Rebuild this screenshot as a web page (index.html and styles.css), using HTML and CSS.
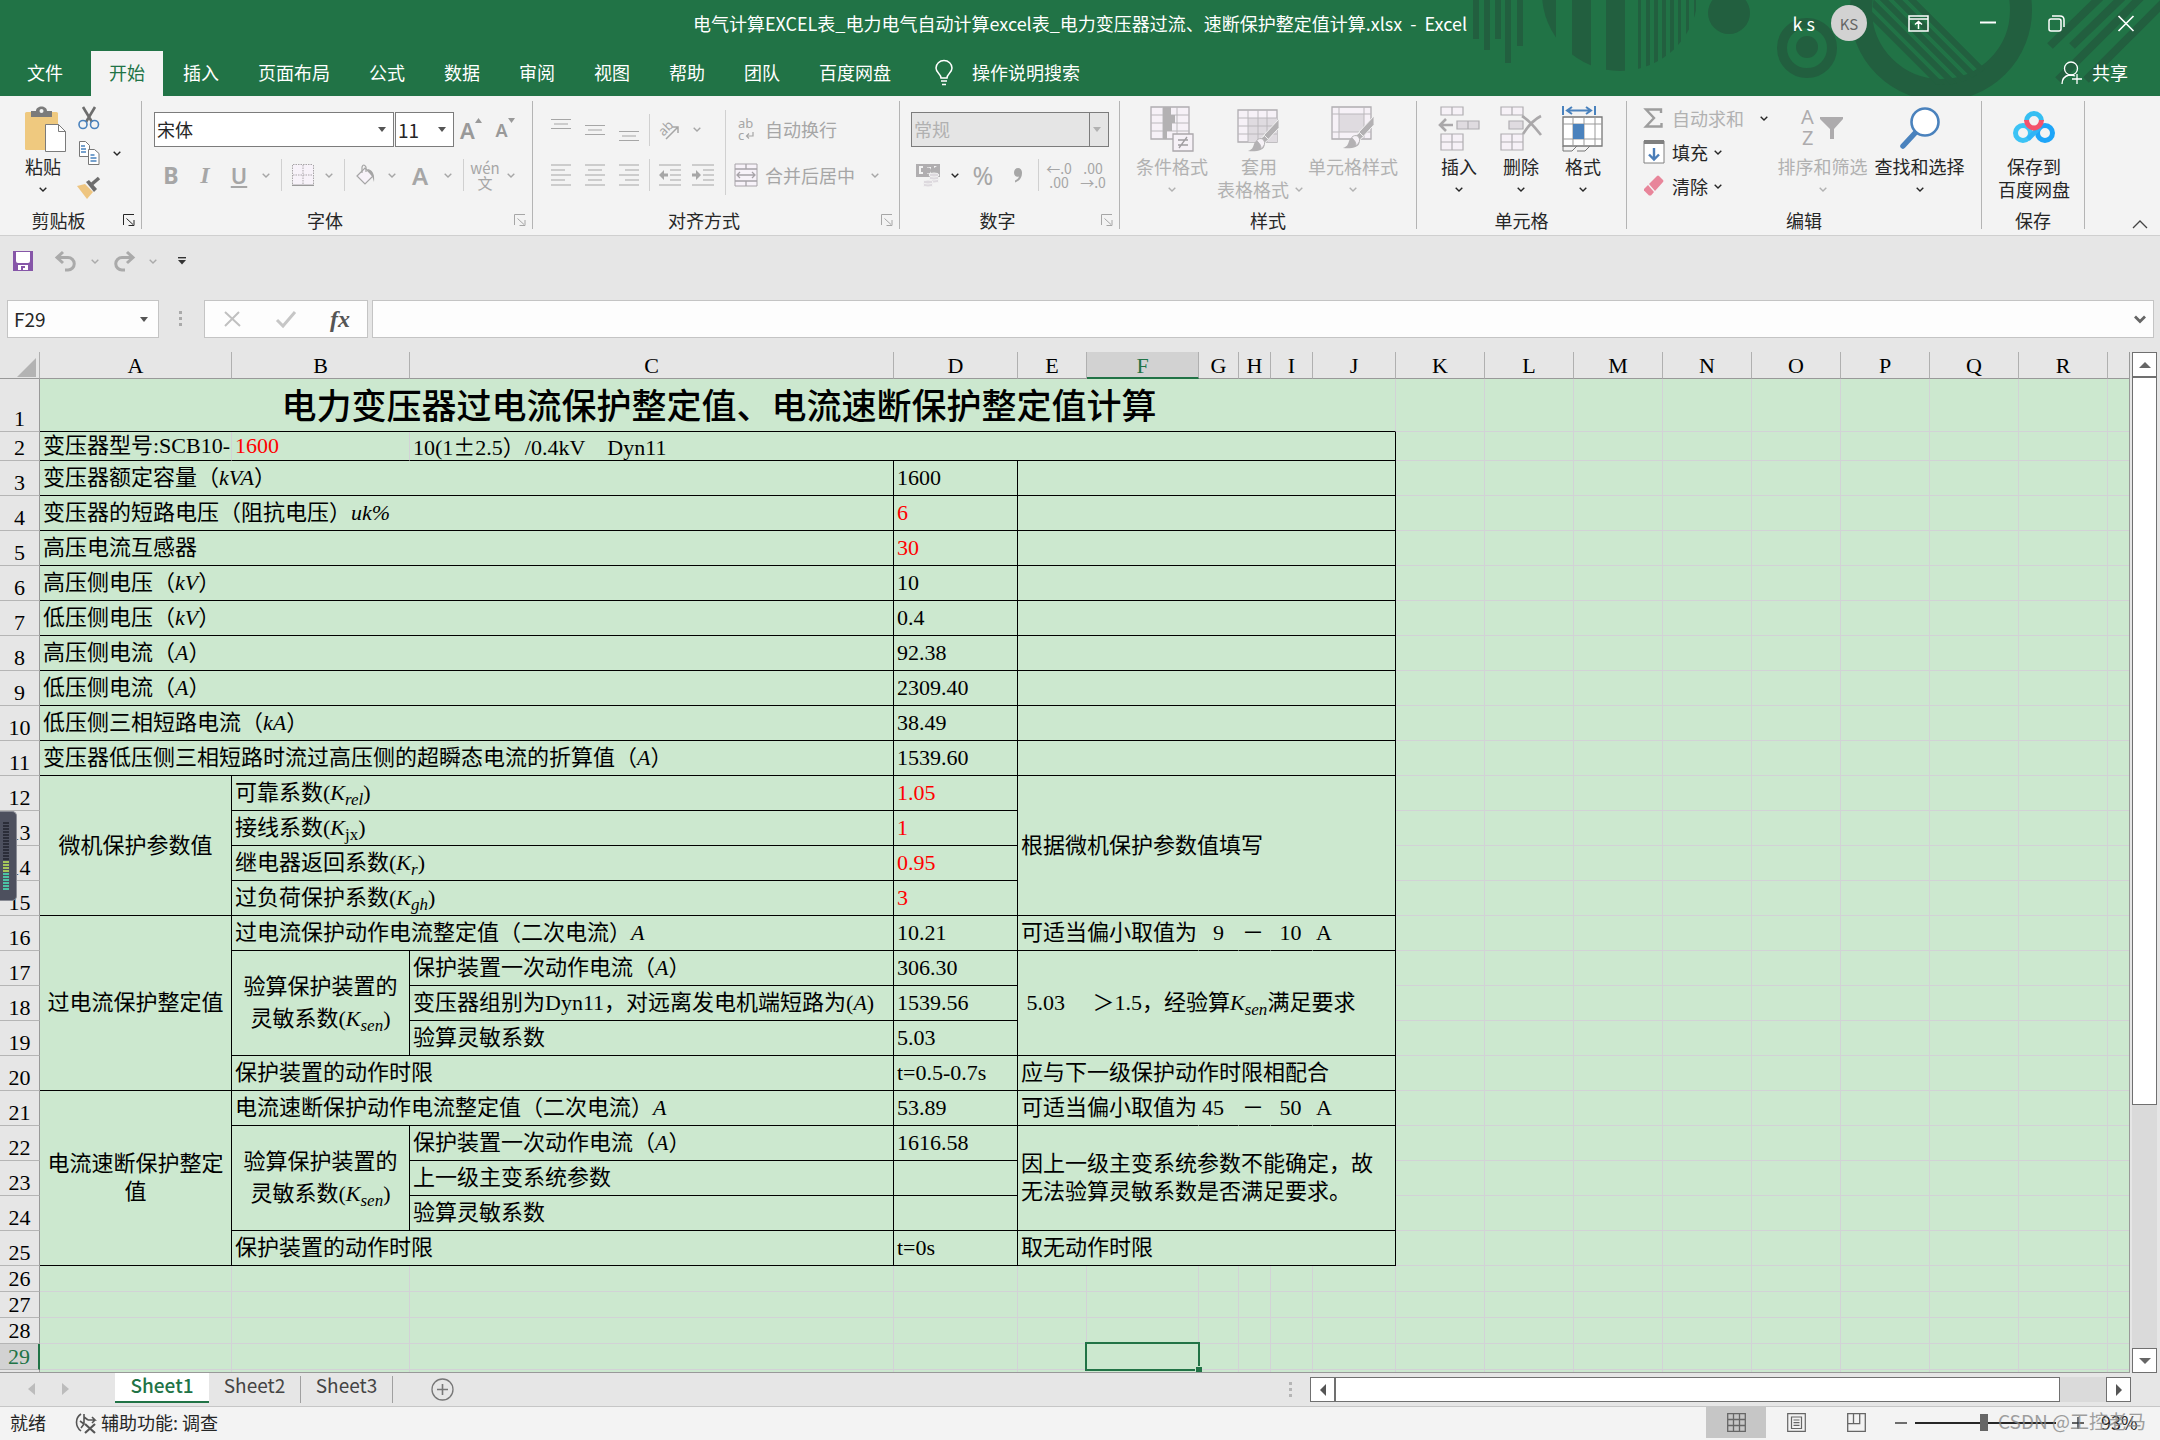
FILE: index.html
```html
<!DOCTYPE html>
<html lang="zh-CN">
<head>
<meta charset="utf-8">
<title>电气计算EXCEL表 - Excel</title>
<link rel="stylesheet" href="styles.css">
</head>
<body>
<svg class="sprite" aria-hidden="true">
  <symbol id="chev" viewBox="0 0 8 5"><path d="M.7.7 4 4 7.300.7" fill="none" stroke="currentColor" stroke-width="1.400"/></symbol>
  <symbol id="launch" viewBox="0 0 12 12"><path d="M.5 11V.5H11M3.500 4.500l6.500 6M11 6v5.500H5.500" fill="none" stroke="currentColor"/></symbol>
  <symbol id="paint" viewBox="0 0 34 34"><path d="M33 0v9L22 21l-5-4z" fill="#b3b1b3" stroke="#f3f3f3"/><path d="M18 17l4 4-4 4-5-4z" fill="#b3b1b3" stroke="#f3f3f3"/><path d="M1 33c6-2 5-5 7-9 3-4 10-1 10 3 0 5-8 7-17 6z" fill="#b3b1b3"/><path d="M10 22c4-4 9-1 8 4-1 3-3 4-4 5 1-4-1-5-4-9z" fill="#f5f1f6" stroke="#b3b1b3"/></symbol>
</svg>

<header class="top">
  <svg class="deco" viewBox="0 0 720 96" aria-hidden="true">
    <defs><clipPath id="ball"><circle cx="180" cy="-7" r="78"/></clipPath><clipPath id="ring"><ellipse cx="501" cy="15" rx="69" ry="70"/></clipPath></defs>
    <g fill="#225f3f">
      <path d="M33 0h6v39h-6zM44 0h6v50h-6zM55 0h6v39h-6zM65 0h6v63h-6zM77 0h6v46h-6z"/>
      <g clip-path="url(#ball)"><path d="M102 0h14v71h-14zM132 0h19v71h-19zM166 0h19v72h-19zM198 0h3v71h-3zM206 0h4v71h-4zM214 0h4v71h-4zM222 0h4v71h-4zM230 0h4v71h-4zM238 0h3v71h-3zM246 0h3v71h-3zM254 0h2v71h-2z"/></g>
      <circle cx="289" cy="13" r="21"/><circle cx="367" cy="47" r="11"/>
    </g>
    <g fill="none" stroke="#225f3f">
      <circle cx="367" cy="48" r="25" stroke-width="10"/>
      <circle cx="501" cy="10" r="80" stroke-width="22"/>
      <path clip-path="url(#ring)" stroke-width="6" d="M424 8l84 84M424-6l96 96M426-18l106 106M434-24l110 110M446-26l110 110"/>
      <path stroke-width="8" d="M676-18l-66 64M698-18l-66 64M716-18 618 80M738-12 646 80"/>
    </g>
  </svg>
  <div class="titlebar">
    <h1>电气计算EXCEL表_电力电气自动计算excel表_电力变压器过流、速断保护整定值计算.xlsx&nbsp; -&nbsp; Excel</h1>
    <div class="win">
      <span>k s</span><span class="avatar">KS</span>
      <button aria-label="功能区显示选项"><svg width="21" height="17" viewBox="0 0 21 17"><path d="M1 1h19v15H1zM1 4h19M10.500 14V6.500M7 9.500l3.500-3 3.500 3" fill="none" stroke="#fff" stroke-width="1.500"/></svg></button>
      <button aria-label="最小化"><svg width="16" height="17" viewBox="0 0 16 17"><path d="M0 7.500h16" stroke="#fff" stroke-width="2"/></svg></button>
      <button aria-label="还原"><svg width="17" height="17" viewBox="0 0 17 17"><path d="M4 1h8q4 0 4 4v7" fill="none" stroke="#fff" stroke-width="1.500"/><rect x="1" y="4" width="12" height="12" rx="2" fill="none" stroke="#fff" stroke-width="1.500"/></svg></button>
      <button aria-label="关闭"><svg width="16" height="17" viewBox="0 0 16 17"><path d="M.5 1l15 15M15.500 1l-15 15" stroke="#fff" stroke-width="1.700"/></svg></button>
    </div>
  </div>
  <nav class="tabs">
    <button class="file">文件</button><button class="on">开始</button><button>插入</button><button>页面布局</button><button>公式</button><button>数据</button><button>审阅</button><button>视图</button><button>帮助</button><button>团队</button><button>百度网盘</button>
    <button class="tell"><svg width="18" height="26" viewBox="0 0 18 26"><path d="M6 18c0-4-5-5-5-10a8 7.500 0 0116 0c0 5-5 6-5 10zM6 21h6M7 24.500h4" fill="none" stroke="#fff" stroke-width="1.500"/></svg>操作说明搜索</button>
    <button class="share"><svg width="22" height="24" viewBox="0 0 22 24"><path d="M1 23c0-5 3-8 7-9M14 15c-2-1-4-1-6-1M16 13v10M11 18h10" fill="none" stroke="#fff" stroke-width="1.300"/><circle cx="10" cy="7.500" r="6.500" fill="none" stroke="#fff" stroke-width="1.300"/></svg>共享</button>
  </nav>
</header>

<section class="ribbon">
  <div class="group g-clip">
    <div class="body">
      <button class="big w-paste"><svg width="47" height="46" viewBox="-5 0 47 46"><rect x="0" y="6" width="33" height="38" rx="1.500" fill="#efc97f"/><path d="M6 11V5h5c0-6 11-6 11 0h5v6z" fill="#7b7b7b"/><circle cx="16.500" cy="5" r="2" fill="#f3f3f3"/><path d="M20.500 18.500h13l7 7v20h-20z" fill="#fff" stroke="#7b7b7b"/><path d="M33.500 18.500v7h7" fill="none" stroke="#7b7b7b"/></svg><span>粘贴</span><svg class="chev"><use href="#chev"/></svg></button>
      <div class="stack">
        <button class="ico"><svg width="22" height="24" viewBox="0 0 22 24"><path d="M5 1l9 15M17 1 8 16" stroke="#6d6d6d" stroke-width="2.600"/><circle cx="5" cy="18.500" r="4" fill="none" stroke="#4a82bd" stroke-width="1.600"/><circle cx="16.500" cy="18.500" r="4" fill="none" stroke="#4a82bd" stroke-width="1.600"/></svg></button>
        <div class="line"><button class="ico"><svg width="22" height="24" viewBox="0 0 22 24"><path d="M1.500.5h6l4 4v11h-10z" fill="#fff" stroke="#777"/><path d="M3 5h4M3 8h5M3 11h5" stroke="#4a82bd" stroke-width="1.300"/><path d="M10.500 8.500h6l4.500 4v11H10.500z" fill="#fff" stroke="#777"/><path d="M12.500 14h4M12.500 17h6M12.500 20h6" stroke="#4a82bd" stroke-width="1.300"/></svg></button><svg class="chev"><use href="#chev"/></svg></div>
        <button class="ico"><svg width="24" height="22" viewBox="0 0 24 22"><path d="M0 9l8-2 8 8-6 7z" fill="#eec580"/><path d="M9 5l3-2 8 9-3 3z" fill="#6d6d6d"/><path d="M15 7l7-6" stroke="#6d6d6d" stroke-width="3.500"/></svg></button>
      </div>
    </div>
    <footer><span>剪贴板</span><button aria-label="剪贴板设置"><svg width="12" height="12"><use href="#launch"/></svg></button></footer>
  </div>

  <div class="group g-font dim">
    <div class="body col">
      <div class="line top-line">
        <label class="combo c-name"><select aria-label="字体"><option>宋体</option></select></label>
        <label class="combo c-size"><select aria-label="字号"><option>11</option></select></label>
        <button class="s28 grow">A<svg width="7" height="5"><path d="M0 5 3.500 0 7 5z" fill="currentColor"/></svg></button>
        <button class="s28 grow small">A<svg width="7" height="5"><path d="M0 0h7L3.500 5z" fill="currentColor"/></svg></button>
      </div>
      <div class="line">
        <button class="s34 fb">B</button><button class="s34 fi">I</button><button class="s34 fu">U</button><svg class="chev"><use href="#chev"/></svg><i class="bar b5"></i>
        <button class="s32"><svg width="22" height="22" viewBox="0 0 22 22"><path d="M1 1h20v20H1z" fill="#f7f2f9"/><path d="M1 .5h20M.5 1v20M21.500 1v20M11 1v20M1 11h20" stroke="#a9a5a9" stroke-dasharray="1.500 1" fill="none"/><path d="M0 21.300h22" stroke="#9a9a9a" stroke-width="1.400"/></svg></button><svg class="chev"><use href="#chev"/></svg><i class="bar b5"></i>
        <button class="s32"><svg width="22" height="22" viewBox="0 0 22 22"><path d="M2 12l8-8 8 8-8 8z" fill="#f7f2f9" stroke="#a5a5a5" stroke-width="1.200"/><path d="M7 9V3q1.500-4 4 0v5" fill="none" stroke="#a5a5a5" stroke-width="1.200"/><path d="M12 5c5 0 8 5 7 13-1-3-1-5-3-7z" fill="#a5a5a5"/></svg></button><svg class="chev"><use href="#chev"/></svg>
        <button class="s36 fa">A</button><svg class="chev"><use href="#chev"/></svg><i class="bar b5"></i>
        <button class="s32 wen"><span>wén</span><span>文</span></button><svg class="chev"><use href="#chev"/></svg>
      </div>
    </div>
    <footer><span>字体</span><button aria-label="字体设置"><svg width="12" height="12"><use href="#launch"/></svg></button></footer>
  </div>

  <div class="group g-align dim">
    <div class="body">
      <div class="col">
        <div class="line top-line">
          <button class="s34"><svg width="20" height="24"><path d="M0 1.500h20M3 6h14M0 10.500h20" stroke="currentColor" stroke-width="1.200"/></svg></button>
          <button class="s34"><svg width="20" height="24"><path d="M0 7.500h20M3 12h14M0 16.500h20" stroke="currentColor" stroke-width="1.200"/></svg></button>
          <button class="s34"><svg width="20" height="24"><path d="M0 13.500h20M3 18h14M0 22.500h20" stroke="currentColor" stroke-width="1.200"/></svg></button><i class="bar b3"></i>
          <button class="s34"><svg width="22" height="22" viewBox="0 0 22 22"><text x="0" y="13" class="svgab" transform="rotate(-45 8 10)">ab</text><path d="M7 20 19 8M19 14V8h-6" fill="none" stroke="currentColor" stroke-width="1.500"/></svg></button><svg class="chev"><use href="#chev"/></svg>
        </div>
        <div class="line">
          <button class="s34"><svg width="20" height="22"><path d="M0 1h20M0 6h14M0 11h20M0 16h14M0 21h20" stroke="currentColor" stroke-width="1.200"/></svg></button>
          <button class="s34"><svg width="20" height="22"><path d="M0 1h20M3 6h14M0 11h20M3 16h14M0 21h20" stroke="currentColor" stroke-width="1.200"/></svg></button>
          <button class="s34"><svg width="20" height="22"><path d="M0 1h20M6 6h14M0 11h20M6 16h14M0 21h20" stroke="currentColor" stroke-width="1.200"/></svg></button><i class="bar b3"></i>
          <button class="s34"><svg width="22" height="22"><path d="M0 1h22M11 6h11M11 11h11M11 16h11M0 21h22" stroke="currentColor" stroke-width="1.200"/><path d="M0 11l5-5v3.500h4v3H5V16z" fill="currentColor"/></svg></button>
          <button class="s32"><svg width="22" height="22"><path d="M0 1h22M11 6h11M11 11h11M11 16h11M0 21h22" stroke="currentColor" stroke-width="1.200"/><path d="M9 11 4 6v3.500H0v3h4V16z" fill="currentColor"/></svg></button>
        </div>
      </div>
      <i class="bar tall"></i>
      <div class="col">
        <div class="line top-line"><button class="txt"><svg width="20" height="24" viewBox="0 0 20 24"><text x="2" y="10" class="svgab">ab</text><text x="2" y="22" class="svgab">c</text><path d="M17 14v4h-6M13 15.500 10.500 18l2.500 2.500" fill="none" stroke="currentColor" stroke-width="1.200"/></svg>自动换行</button></div>
        <div class="line"><button class="txt"><svg width="24" height="24" viewBox="0 0 24 24"><path d="M1 1h22v22H1z" fill="#f7f2f9" stroke="#a7a3a8"/><path d="M1 6h22M1 18h22M12 1v5M12 18v5M3 12h18M6 9l-3 3 3 3M18 9l3 3-3 3" fill="none" stroke="#a7a3a8" stroke-width="1.300"/></svg>合并后居中</button><svg class="chev gap"><use href="#chev"/></svg></div>
      </div>
    </div>
    <footer><span>对齐方式</span><button aria-label="对齐设置"><svg width="12" height="12"><use href="#launch"/></svg></button></footer>
  </div>

  <div class="group g-num dim">
    <div class="body col">
      <div class="line top-line"><label class="combo c-fmt"><select aria-label="数字格式" disabled><option>常规</option></select></label></div>
      <div class="line">
        <button class="s34"><svg width="24" height="24" viewBox="0 0 24 24"><path d="M0 1h24v13H0z" fill="#b0aeb0"/><path d="M3 3h4v2H5v4h2v2H3zM21 3h-3v2M11 4h4v7h-4z" fill="#f3f3f3"/><circle cx="12" cy="7.500" r="3" fill="#b0aeb0"/><g fill="#ddd9de" stroke="#f3f3f3"><ellipse cx="18" cy="18" rx="5" ry="2"/><ellipse cx="18" cy="15" rx="5" ry="2"/><ellipse cx="18" cy="12" rx="5" ry="2"/><ellipse cx="12" cy="22" rx="5" ry="2"/><ellipse cx="12" cy="19" rx="5" ry="2"/></g></svg></button><svg class="chev dark"><use href="#chev"/></svg>
        <button class="s36 pct">%</button>
        <button class="s34"><svg width="10" height="15"><path d="M1 4.500a4 4.500 0 018 0c0 5-2 8-7 10v-2c2-1 3.500-2 4-4C3 9.500 1 7.500 1 4.500z" fill="currentColor"/></svg></button><i class="bar b3"></i>
        <button class="s34 dec"><span>←.0</span><span>.00</span></button>
        <button class="s34 dec"><span>.00</span><span>→.0</span></button>
      </div>
    </div>
    <footer><span>数字</span><button aria-label="数字设置"><svg width="12" height="12"><use href="#launch"/></svg></button></footer>
  </div>

  <div class="group g-style">
    <div class="body gray">
      <button class="big w82"><svg width="44" height="46" viewBox="0 0 44 46"><path d="M1 1h38v32H1z" fill="#f6f1f7" stroke="#b0adb1" stroke-width="1.300"/><path d="M1 9h38M1 17h38M1 25h38M13 1v32M27 1v32" stroke="#bbb8bc"/><path d="M13 1h8v8h-8zM13 9h12v8H13zM13 17h9v8h-9zM13 25h4v8h-4z" fill="#b3b1b3"/><path d="M23 28h20v17H23z" fill="#f6f1f7" stroke="#aaa7ab" stroke-width="1.300"/><path d="M28 34h10M28 39h10M37 31l-8 11" stroke="#a09da1" stroke-width="1.300"/></svg><span>条件格式</span><svg class="chev"><use href="#chev"/></svg></button>
      <button class="big w92"><svg width="44" height="46" viewBox="0 0 44 46"><path d="M1 4h39v32H1z" fill="#f6f1f7" stroke="#b0adb1" stroke-width="1.300"/><path d="M11 12h29v24H11z" fill="#dfdbe0"/><path d="M1 12h39M1 20h39M1 28h39M11 4v32M21 4v32M30 4v32" stroke="#bbb8bc"/><use href="#paint" x="10" y="13" width="33" height="33"/></svg><span>套用</span><span class="two">表格格式<svg class="chev"><use href="#chev"/></svg></span></button>
      <button class="big w96"><svg width="44" height="46" viewBox="0 0 44 46"><path d="M1 1h39v32H1z" fill="#f6f1f7" stroke="#b0adb1" stroke-width="1.300"/><path d="M8 8h25v18H8z" fill="#dfdbe0"/><path d="M1 8h39M1 26h39M8 1v32M33 1v32" stroke="#bbb8bc"/><use href="#paint" x="11" y="10" width="33" height="33"/></svg><span>单元格样式</span><svg class="chev"><use href="#chev"/></svg></button>
    </div>
    <footer><span>样式</span></footer>
  </div>

  <div class="group g-cell">
    <div class="body">
      <button class="big w62"><svg width="44" height="46" viewBox="0 0 44 46"><g fill="#f6f1f7" stroke="#b0adb1" stroke-width="1.200"><path d="M4 1h22v8H4zM15 1v8M4 28h22v16H4zM15 28v16M4 36h22"/><path d="M20 15h22v8H20zM31 15v8" fill="#dfdbe0"/></g><path d="M16 19H3M9 13l-6 6 6 6" fill="none" stroke="#aaa8aa" stroke-width="2.600"/></svg><span>插入</span><svg class="chev"><use href="#chev"/></svg></button>
      <button class="big w62"><svg width="44" height="46" viewBox="0 0 44 46"><g fill="#f6f1f7" stroke="#b0adb1" stroke-width="1.200"><path d="M2 1h22v8H2zM13 1v8M2 28h22v16H2zM13 28v16M2 36h22"/><path d="M10 15h14v8H10z" fill="#dfdbe0"/></g><path d="M23 10c7 4 12 10 19 19M42 10c-8 4-13 10-18 18" fill="none" stroke="#aaa8aa" stroke-width="2.600"/></svg><span>删除</span><svg class="chev"><use href="#chev"/></svg></button>
      <button class="big w62"><svg width="44" height="46" viewBox="0 0 44 46"><path d="M2 0v9M34 0v9M6 4.500h24M11 1 6 4.500 11 8M25 1l5 3.500L25 8" fill="none" stroke="#4a82bd" stroke-width="2"/><path d="M2 11h39v29H2z" fill="#fff" stroke="#777" stroke-width="1.300"/><path d="M2 18h39M2 33h39M12 11v29M23 11v29M34 11v29" stroke="#999"/><path d="M12 18h11v15H12z" fill="#4a82bd"/><path d="M2 40v5h9l5-5M16 45h8l5-5" fill="none" stroke="#777"/></svg><span>格式</span><svg class="chev"><use href="#chev"/></svg></button>
    </div>
    <footer><span>单元格</span></footer>
  </div>

  <div class="group g-edit">
    <div class="body">
      <div class="list">
        <div class="line"><button class="txt gray"><svg width="20" height="20" viewBox="0 0 20 20"><path d="M17 5V1.500H2L10 10 2 18.500h15.500V15" fill="none" stroke="#9d9d9d" stroke-width="2.400"/></svg>自动求和</button><svg class="chev gap"><use href="#chev"/></svg></div>
        <div class="line"><button class="txt"><svg width="22" height="24" viewBox="0 0 22 24"><path d="M1 1h20v22H1z" fill="#fff" stroke="#808080"/><path d="M1 0h20v4H1z" fill="#808080"/><path d="M11 8v12M6 14.500l5 5 5-5" fill="none" stroke="#4a7db8" stroke-width="2.400"/></svg>填充</button><svg class="chev"><use href="#chev"/></svg></div>
        <div class="line"><button class="txt"><svg width="22" height="22" viewBox="0 0 22 22"><path d="M14 1q1-1 2 0l4 4q1 1 0 2l-8 9-6-7z" fill="#e8859a"/><path d="M5 10l6 7-3 3.500H6L1 15.500V14z" fill="#e8859a"/></svg>清除</button><svg class="chev"><use href="#chev"/></svg></div>
      </div>
      <button class="big w97 gray"><svg width="44" height="46" viewBox="0 0 44 46"><text x="0" y="18" class="svgaz">A</text><text x="1" y="39" class="svgaz">Z</text><path d="M19 11h23v2l-9 10v10h-4V23l-10-10z" fill="#adabad"/></svg><span>排序和筛选</span><svg class="chev"><use href="#chev"/></svg></button>
      <button class="big w97"><svg width="44" height="46" viewBox="0 0 44 46"><path d="M18 26 5 40" stroke="#4a82bd" stroke-width="5.500" stroke-linecap="round"/><circle cx="27" cy="16" r="13.500" fill="#fff" stroke="#4a82bd" stroke-width="2.600"/></svg><span>查找和选择</span><svg class="chev"><use href="#chev"/></svg></button>
    </div>
    <footer><span>编辑</span></footer>
  </div>

  <div class="group g-save">
    <div class="body">
      <button class="big w96"><svg width="44" height="46" viewBox="0 0 44 46"><g fill="none" stroke-width="5"><circle cx="11" cy="27" r="7.500" stroke="#3cc3f5"/><circle cx="33" cy="27" r="7.500" stroke="#1ea5f8"/><path d="M16 33 28 21" stroke="#2fb4f7"/><path d="M14.500 15a7.500 7.500 0 0115 0" stroke="#36bff2"/><path d="M14.500 14a7.500 8 0 0015 0" stroke="#f4526b"/></g></svg><span>保存到</span><span>百度网盘</span></button>
    </div>
    <footer><span>保存</span></footer>
  </div>
  <button class="collapse" aria-label="折叠功能区"><svg width="16" height="9"><path d="M1 8l7-7 7 7" fill="none" stroke="#444" stroke-width="1.300"/></svg></button>
</section>

<div class="qat">
  <button class="q38" aria-label="保存"><svg width="20" height="20" viewBox="0 0 20 20"><path d="M0 0h20v20H0z" fill="#8656a8"/><path d="M3 1h14v9q0 2-2 2H5q-2 0-2-2zM5 14h10v5H5z" fill="#fff"/><path d="M8 15h4v4H8z" fill="#8656a8"/><path d="M10 17h2v2h-2z" fill="#fff"/></svg></button>
  <button class="q38" aria-label="撤消"><svg width="22" height="20" viewBox="0 0 22 20"><path d="M8 1 2 6.500 8 12M2 6.500h11a6.200 6.200 0 010 12.500h-3" fill="none" stroke="#aaa" stroke-width="3"/></svg></button><svg class="chev"><use href="#chev"/></svg>
  <button class="q38" aria-label="恢复"><svg width="22" height="20" viewBox="0 0 22 20"><path d="M14 1l6 5.500-6 5.500M20 6.500H9A6.200 6.200 0 009 19h3" fill="none" stroke="#aaa" stroke-width="3"/></svg></button><svg class="chev"><use href="#chev"/></svg>
  <button class="q38" aria-label="自定义"><svg width="8" height="8"><path d="M0 .7h8" stroke="#333" stroke-width="1.400"/><path d="M0 3h8L4 7.500z" fill="#333"/></svg></button>
</div>

<div class="fbar">
  <label class="combo namebox"><input value="F29" aria-label="名称框"></label>
  <svg class="dots" width="3" height="16"><path d="M0 0h3v3H0zM0 6h3v3H0zM0 12h3v3H0z" fill="#aaa"/></svg>
  <div class="fbtns">
    <button aria-label="取消"><svg width="17" height="16"><path d="M1 1l15 14M15 1 1 15" stroke="#c0c0c0" stroke-width="2"/></svg></button>
    <button aria-label="输入"><svg width="20" height="17"><path d="M1 9l6 6L19 1" fill="none" stroke="#c6c6c6" stroke-width="3"/></svg></button>
    <button class="fx" aria-label="插入函数">fx</button>
  </div>
  <label class="formula"><input aria-label="编辑栏"><svg width="12" height="9"><path d="M1 1.500l5 5 5-5" fill="none" stroke="#666" stroke-width="2.800"/></svg></label>
</div>

<main class="sheet">
  <div class="view">
  <table>
    <colgroup><col class="c-h"><col class="c-a"><col class="c-b"><col class="c-c"><col class="c-d"><col class="c-e"><col class="c-f"><col class="c-g"><col class="c-hh"><col class="c-i"><col class="c-j"><col span="9" class="c-n"></colgroup>
    <thead><tr><th class="corner"><svg width="19" height="19"><path d="M19 0v19H0z" fill="#b3b3b3"/></svg></th><th>A<th>B<th>C<th>D<th>E<th class="cur">F<th>G<th>H<th>I<th>J<th>K<th>L<th>M<th>N<th>O<th>P<th>Q<th>R<th></tr></thead>
    <tbody>
    <tr class="r1"><th>1<td colspan="10" class="k title">电力变压器过电流保护整定值、电流速断保护整定值计算<td><td><td><td><td><td><td><td><td></tr>
    <tr class="r2"><th>2<td class="kb">变压器型号:SCB10-<td class="kb red">1600<td colspan="8" class="k">10(1<span class="cjk">±</span>2.5）/0.4kV&nbsp;&nbsp;&nbsp; Dyn11<td><td><td><td><td><td><td><td><td></tr>
    <tr><th>3<td colspan="3" class="k">变压器额定容量（<i>kVA</i>）<td class="k">1600<td colspan="6" class="k"><td><td><td><td><td><td><td><td><td></tr>
    <tr><th>4<td colspan="3" class="k">变压器的短路电压（阻抗电压）<i>uk%</i><td class="k red">6<td colspan="6" class="k"><td><td><td><td><td><td><td><td><td></tr>
    <tr><th>5<td colspan="3" class="k">高压电流互感器<td class="k red">30<td colspan="6" class="k"><td><td><td><td><td><td><td><td><td></tr>
    <tr><th>6<td colspan="3" class="k">高压侧电压（<i>kV</i>）<td class="k">10<td colspan="6" class="k"><td><td><td><td><td><td><td><td><td></tr>
    <tr><th>7<td colspan="3" class="k">低压侧电压（<i>kV</i>）<td class="k">0.4<td colspan="6" class="k"><td><td><td><td><td><td><td><td><td></tr>
    <tr><th>8<td colspan="3" class="k">高压侧电流（<i>A</i>）<td class="k">92.38<td colspan="6" class="k"><td><td><td><td><td><td><td><td><td></tr>
    <tr><th>9<td colspan="3" class="k">低压侧电流（<i>A</i>）<td class="k">2309.40<td colspan="6" class="k"><td><td><td><td><td><td><td><td><td></tr>
    <tr><th>10<td colspan="3" class="k">低压侧三相短路电流（<i>kA</i>）<td class="k">38.49<td colspan="6" class="k"><td><td><td><td><td><td><td><td><td></tr>
    <tr><th>11<td colspan="3" class="k">变压器低压侧三相短路时流过高压侧的超瞬态电流的折算值（<i>A</i>）<td class="k">1539.60<td colspan="6" class="k"><td><td><td><td><td><td><td><td><td></tr>
    <tr><th>12<td rowspan="4" class="k mid">微机保护参数值<td colspan="2" class="k">可靠系数(<i>K<sub>rel</sub></i>)<td class="k red">1.05<td colspan="6" rowspan="4" class="k">根据微机保护参数值填写<td><td><td><td><td><td><td><td><td></tr>
    <tr><th>13<td colspan="2" class="k">接线系数(<i>K</i><sub>jx</sub>)<td class="k red">1<td><td><td><td><td><td><td><td><td></tr>
    <tr><th>14<td colspan="2" class="k">继电器返回系数(<i>K<sub>r</sub></i>)<td class="k red">0.95<td><td><td><td><td><td><td><td><td></tr>
    <tr><th>15<td colspan="2" class="k">过负荷保护系数(<i>K<sub>gh</sub></i>)<td class="k red">3<td><td><td><td><td><td><td><td><td></tr>
    <tr><th>16<td rowspan="5" class="k mid">过电流保护整定值<td colspan="2" class="k">过电流保护动作电流整定值（二次电流）<i>A</i><td class="k">10.21<td colspan="2" class="k nr">可适当偏小取值为<td class="k nr">&nbsp;&nbsp;9<td class="k nr">－<td class="k nr">&nbsp;10<td class="k">A<td><td><td><td><td><td><td><td><td></tr>
    <tr><th>17<td rowspan="3" class="k mid loose">验算保护装置的<br>灵敏系数(<i>K<sub>sen</sub></i>)<td class="k">保护装置一次动作电流（<i>A</i>）<td class="k">306.30<td colspan="6" rowspan="3" class="k">&nbsp;5.03&nbsp;&nbsp;&nbsp;&nbsp; ＞1.5，经验算<i>K<sub>sen</sub></i>满足要求<td><td><td><td><td><td><td><td><td></tr>
    <tr><th>18<td class="k">变压器组别为Dyn11，对远离发电机端短路为(<i>A</i>)<td class="k">1539.56<td><td><td><td><td><td><td><td><td></tr>
    <tr><th>19<td class="k">验算灵敏系数<td class="k">5.03<td><td><td><td><td><td><td><td><td></tr>
    <tr><th>20<td colspan="2" class="k">保护装置的动作时限<td class="k">t=0.5-0.7s<td colspan="6" class="k">应与下一级保护动作时限相配合<td><td><td><td><td><td><td><td><td></tr>
    <tr><th>21<td rowspan="5" class="k mid">电流速断保护整定值<td colspan="2" class="k">电流速断保护动作电流整定值（二次电流）<i>A</i><td class="k">53.89<td colspan="2" class="k nr">可适当偏小取值为<td class="k nr">45<td class="k nr">－<td class="k nr">&nbsp;50<td class="k">A<td><td><td><td><td><td><td><td><td></tr>
    <tr><th>22<td rowspan="3" class="k mid loose">验算保护装置的<br>灵敏系数(<i>K<sub>sen</sub></i>)<td class="k">保护装置一次动作电流（<i>A</i>）<td class="k">1616.58<td colspan="6" rowspan="3" class="k wrap">因上一级主变系统参数不能确定，故<br>无法验算灵敏系数是否满足要求。<td><td><td><td><td><td><td><td><td></tr>
    <tr><th>23<td class="k">上一级主变系统参数<td class="k"><td><td><td><td><td><td><td><td><td></tr>
    <tr><th>24<td class="k">验算灵敏系数<td class="k"><td><td><td><td><td><td><td><td><td></tr>
    <tr><th>25<td colspan="2" class="k">保护装置的动作时限<td class="k">t=0s<td colspan="6" class="k">取无动作时限<td><td><td><td><td><td><td><td><td></tr>
    <tr class="rs"><th>26<td><td><td><td><td><td><td><td><td><td><td><td><td><td><td><td><td><td><td></tr>
    <tr class="rs"><th>27<td><td><td><td><td><td><td><td><td><td><td><td><td><td><td><td><td><td><td></tr>
    <tr class="rs"><th>28<td><td><td><td><td><td><td><td><td><td><td><td><td><td><td><td><td><td><td></tr>
    <tr class="rs"><th class="cur">29<td><td><td><td><td><td class="sel"><td><td><td><td><td><td><td><td><td><td><td><td><td></tr>
    <tr class="rs"><th><td><td><td><td><td><td><td><td><td><td><td><td><td><td><td><td><td><td><td></tr>
    </tbody>
  </table>
  </div>
  <div class="vscroll">
    <button aria-label="向上"><svg width="12" height="6"><path d="M0 6 6 0l6 6z" fill="#666"/></svg></button>
    <div class="vtrack"><div class="vthumb"></div></div>
    <button aria-label="向下"><svg width="12" height="6"><path d="M0 0h12L6 6z" fill="#666"/></svg></button>
  </div>
</main>

<div class="sheetbar">
  <div class="arrows"><svg width="7" height="12"><path d="M7 0v12L0 6z" fill="#bcbcbc"/></svg><svg width="7" height="12"><path d="M0 0v12l7-6z" fill="#bcbcbc"/></svg></div>
  <button class="stab on">Sheet1</button><button class="stab">Sheet2</button><button class="stab">Sheet3</button>
  <button class="add" aria-label="新工作表"><svg width="23" height="23"><circle cx="11.500" cy="11.500" r="10.500" fill="none" stroke="#777" stroke-width="1.300"/><path d="M11.500 6v11M6 11.500h11" stroke="#777" stroke-width="1.600"/></svg></button>
  <svg class="dots" width="3" height="16"><path d="M0 0h3v3H0zM0 6h3v3H0zM0 12h3v3H0z" fill="#b5b5b5"/></svg>
  <div class="hscroll">
    <button aria-label="向左"><svg width="6" height="12"><path d="M6 0v12L0 6z" fill="#555"/></svg></button>
    <div class="htrack"><div class="hthumb"></div></div>
    <button aria-label="向右"><svg width="6" height="12"><path d="M0 0v12l6-6z" fill="#555"/></svg></button>
  </div>
</div>

<footer class="status">
  <span class="ready">就绪</span>
  <button class="acc"><svg width="22" height="22" viewBox="0 0 22 22"><path d="M6 2C0 6 0 14 6 19M9 2v10l-3 4M5 9l4 3M9 5l4 3M13 8h7l-3-3M17 11l3-3" fill="none" stroke="#555" stroke-width="1.600"/><path d="M10 12l10 9M20 12l-10 9" stroke="#555" stroke-width="2.200"/></svg>辅助功能: 调查</button>
  <div class="views">
    <button class="on" aria-label="普通"><svg width="19" height="19"><path d="M.7.7h17.600v17.600H.7zM.7 6.500h17.600M.7 12.500h17.600M6.500.7v17.600M12.500.7v17.600" fill="none" stroke="#666" stroke-width="1.300"/></svg></button>
    <button aria-label="页面布局"><svg width="19" height="19"><path d="M.7.7h17.600v17.600H.7zM4.500 4h10v11.500h-10zM6.500 7h6M6.500 9.700h6M6.500 12.400h6" fill="none" stroke="#666" stroke-width="1.200"/></svg></button>
    <button aria-label="分页预览"><svg width="19" height="19"><path d="M.7.7h17.600v17.600H.7zM6.500.7v10M.7 10.700h12v-10" fill="none" stroke="#666" stroke-width="1.300"/></svg></button>
  </div>
  <button class="zm" aria-label="缩小"><svg width="12" height="12"><path d="M0 6h12" stroke="#333" stroke-width="1.400"/></svg></button>
  <input type="range" min="0" max="100" value="49" aria-label="缩放">
  <button class="zm" aria-label="放大"><svg width="12" height="12"><path d="M0 6h12M6 0v12" stroke="#333" stroke-width="1.400"/></svg></button>
  <span class="pct93">93%</span>
</footer>
<span class="mark">CSDN @工控老马</span>
<div class="meter"><svg width="6" height="70"><path d="M3 0v38" stroke="#2b2d38" stroke-width="6" stroke-dasharray="2 1"/><path d="M3 39v12" stroke="#a5c75a" stroke-width="6" stroke-dasharray="2 1"/><path d="M3 51v18" stroke="#4bc5a4" stroke-width="6" stroke-dasharray="2 1"/></svg></div>
</body>
</html>
```
FILE: styles.css
```css
* { box-sizing: border-box; }
body {
  margin: 0; height: 100vh; display: flex; flex-direction: column; overflow: hidden;
  background: #e6e6e6; color: #262626; position: relative;
  font-family: "Noto Sans CJK SC", "Noto Sans", sans-serif; font-size: 18px; line-height: 23px;
}
button { border: 0; background: none; padding: 0; margin: 0; font: inherit; color: inherit; display: flex; align-items: center; justify-content: center; white-space: nowrap; }
select, input { font: inherit; color: #262626; border: 0; background: none; margin: 0; padding: 0; min-width: 0; border-radius: 0; outline: 0; }
svg { display: block; flex: none; overflow: visible; }
.sprite { width: 0; height: 0; position: absolute; }

/* title bar and tabs */
.top { position: relative; background: #217346; color: #fff; flex: none; }
.deco { position: absolute; right: 0; top: 0; width: 720px; height: 96px; overflow: hidden; }
.titlebar { position: relative; display: grid; grid-template-columns: 1fr auto 1fr; align-items: center; height: 51px; padding-bottom: 5px; }
.titlebar h1 { grid-column: 2; margin: 0; font-size: 18px; font-weight: 400; white-space: nowrap; }
.win { display: flex; justify-content: flex-end; align-items: center; }
.win button { width: 69px; height: 40px; }
.avatar { width: 36px; height: 36px; border-radius: 50%; background: #d2d2d2; color: #666; font-size: 15px; display: grid; place-items: center; margin: 0 17px 0 16px; }
.tabs { position: relative; display: flex; gap: 1px; height: 45px; }
.tabs button { padding: 0 19px 2px; }
.tabs .file { padding: 0 26px 2px; width: 90px; }
.tabs .on { background: #f3f3f3; color: #217346; padding: 0 18px 2px; }
.tabs .tell { gap: 19px; padding-left: 24px; }
.tabs .share { margin-left: auto; gap: 9px; padding-right: 32px; }

/* ribbon */
.ribbon { display: flex; flex: none; background: #f3f3f3; border-bottom: 1px solid #cfcfcf; padding: 5px 0 6px; }
.group { display: flex; flex-direction: column; border-right: 1px solid #b4b4b4; flex: none; height: 128px; }
.group .body { display: flex; flex: 1; }
.group footer { display: flex; align-items: center; height: 18px; }
.group footer span { flex: 1; text-align: center; }
.group footer button { width: 24px; }
.g-clip { width: 142px; } .g-clip .body { padding-left: 16px; }
.g-font { width: 391px; } .g-font .body { padding-left: 12px; }
.g-align { width: 367px; } .g-align .body { padding-left: 11px; }
.g-num { width: 220px; } .g-num .body { padding-left: 11px; }
.g-style { width: 297px; } .g-style .body { padding-left: 11px; }
.g-cell { width: 210px; } .g-cell .body { padding-left: 11px; }
.g-edit { width: 355px; } .g-edit .body { padding-left: 12px; }
.g-save { width: 103px; } .g-save .body { padding-left: 4px; }
.dim { color: #a6a6a6; } .dim footer span { color: #262626; }
.gray { color: #b1b1b1; }
.col { display: flex; flex-direction: column; }
.line { display: flex; align-items: center; }
.col > .line { height: 34px; }
.col > .top-line { height: 35px; margin: 11px 0; }
.chev { width: 20px; height: 5px; }
.chev.dark { color: #262626; }
.big { flex-direction: column; justify-content: flex-start; padding-top: 5px; }
.big > svg:first-child { margin-bottom: 3px; }
.big > .chev { margin-top: 9px; }
.two { display: flex; align-items: center; margin: 0 -8px 0 0; }
.w-paste { width: 54px; margin-right: 7px; }
.w62 { width: 62px; } .w82 { width: 82px; } .w92 { width: 92px; } .w97 { width: 97px; } .w96 { width: 96px; }
.stack { display: flex; flex-direction: column; gap: 11px; padding-top: 5px; }
.stack .line { gap: 6px; }
.ico { width: 24px; height: 24px; }
.s28 { width: 28px; height: 32px; } .s32 { width: 32px; height: 32px; } .s34 { width: 34px; height: 32px; } .s36 { width: 36px; height: 32px; }
.bar { width: 1px; height: 32px; background: #d0d0d0; flex: none; }
.b5 { margin: 0 5px; } .b3 { margin: 0 3px; }
.tall { height: 85px; margin: 9px 8px 0 6px; }
.combo { display: grid; align-items: center; background: #fff; border: 1px solid #7c7c7c; height: 35px; }
.combo > *, .combo::after { grid-area: 1 / 1; }
.combo select, .combo input { appearance: none; width: 100%; height: 100%; padding-left: 2px; opacity: 1; }
.combo::after { content: ""; justify-self: end; margin-right: 7px; border: 4px solid transparent; border-top: 5px solid #555; border-bottom: 0; }
.c-name { width: 240px; margin-right: 1px; }
.c-size { width: 59px; margin-right: 3px; } .c-size select { font-size: 19px; }
.c-fmt { width: 198px; background: linear-gradient(90deg, #e5e5e5 177px, #7c7c7c 177px 178px, #e5e5e5 178px); }
.c-fmt select { color: #b1b1b1; } .c-fmt::after { border-top-color: #b1b1b1; }
.grow { font: 600 22px "Noto Sans", sans-serif; color: #999; }
.grow svg { margin-bottom: 18px; } .grow.small { font-size: 18px; margin-left: 6px; }
.fb { font: 700 23px "Noto Sans", sans-serif; } .fi { font: italic 700 24px "Liberation Serif", serif; }
.fu { font: 600 22px "Noto Sans", sans-serif; text-decoration: underline; } .fa { font: 600 24px "Noto Sans", sans-serif; }
.wen { flex-direction: column; font-size: 15px; } .wen span { line-height: 15px; }
.pct { font: 25px "Noto Sans", sans-serif; }
.dec { flex-direction: column; font-size: 14px; } .dec span { line-height: 14px; }
.svgab { font: 13px "Noto Sans", sans-serif; fill: currentColor; }
.svgaz { font: 20px "Noto Sans", sans-serif; fill: #adabad; }
.txt { gap: 7px; } .txt svg { width: 24px; }
.chev.gap { margin-left: 10px; }
.list { width: 135px; padding-left: 3px; } .list .line { height: 34px; }
.list .txt svg { width: 22px; margin-left: 1px; }
.collapse { margin: auto 12px 0 auto; }

/* quick access and formula bar */
.qat { display: flex; align-items: center; height: 50px; flex: none; padding-left: 4px; color: #aaa; }
.qat .q38 { width: 38px; }
.qat .q38:first-child { margin-right: 5px; }
.fbar { display: flex; align-items: center; flex: none; padding: 14px 6px 14px 7px; }
.fbar .combo, .fbtns, .formula { height: 38px; border: 1px solid #c4c4c4; background: #fdfdfd; }
.namebox { width: 152px; font-size: 19px; } .fbar .namebox input { padding: 0 0 2px 6px; } .namebox::after { margin-right: 10px; }
.fbar .dots { margin: 0 22px 0 20px; }
.fbtns { display: flex; width: 164px; margin-right: 4px; }
.fbtns button { flex: 1; }
.fx { font: italic 700 24px "Liberation Serif", serif; color: #555; }
.formula { flex: 1; display: flex; align-items: center; padding-right: 7px; } .formula input { flex: 1; }

/* worksheet */
.sheet { flex: 1; display: flex; min-height: 0; }
.view { flex: 1; min-width: 0; overflow: hidden; border-right: 1px solid #999; border-bottom: 1px solid #999; background: #cce8cf; }
table { table-layout: fixed; width: 2197px; border-collapse: separate; border-spacing: 0; font: 22px/24px "Liberation Serif", "Noto Sans CJK SC", serif; color: #000; }
.c-h { width: 40px; } .c-a { width: 192px; } .c-b { width: 178px; } .c-c { width: 484px; } .c-d { width: 124px; } .c-e { width: 69px; } .c-f { width: 112px; }
.c-g { width: 40px; } .c-hh { width: 32px; } .c-i { width: 42px; } .c-j { width: 83px; } .c-n { width: 89px; }
th { font-weight: 400; background: #e6e6e6; padding: 0; border-right: 1px solid #a6a6a6; border-bottom: 1px solid #b5b5b5; }
thead th { height: 27px; border-color: #b0b0b0; border-bottom-color: #999; padding-top: 2px; }
thead .corner svg { margin: 2px 3px 0 auto; }
tbody th { vertical-align: bottom; border-right-color: #999; }
th.cur { background: #d2d2d2; color: #217346; }
thead .cur { border-bottom: 2px solid #217346; line-height: 23px; } tbody .cur { border-right: 2px solid #217346; }
td { height: 35px; padding: 0 0 0 3px; border-right: 1px solid #d2d2d6; border-bottom: 1px solid #d2d2d6; white-space: nowrap; }
.r1 td { height: 53px; } .r2 td { height: 29px; line-height: 20px; } .rs td { height: 26px; }
td.k { border-color: #000; }
td.kb { border-bottom-color: #000; }
td.nr { border-right-color: #cce8cf; }
.r1 td.title { text-align: center; font-size: 35px; line-height: 40px; padding-top: 6px; font-weight: 500; border-right-color: #d2d2d6; }
.mid, .wrap { line-height: 28px; }
.mid { text-align: center; white-space: normal; padding: 0 3px; }
.loose { line-height: 32px; }
.red { color: #f00; }
.cjk { font-family: "Noto Sans CJK SC", sans-serif; line-height: 1; }
sub { font-size: 17px; line-height: 0; vertical-align: -5px; }
.sel { position: relative; }
.sel::before { content: ""; position: absolute; inset: -2px; border: 2px solid #217346; }
.sel::after { content: ""; position: absolute; right: -4px; bottom: -4px; width: 6px; height: 6px; background: #217346; border: 1px solid #cce8cf; border-right: 0; border-bottom: 0; }
.vscroll { width: 30px; padding: 0 3px 0 2px; display: flex; flex-direction: column; }
.vscroll button, .hscroll button { background: #fff; border: 1px solid #707070; width: 25px; height: 25px; flex: none; }
.vtrack { flex: 1; background: #dadada; }
.vthumb { height: 75%; background: #fff; border: 1px solid #707070; }

/* sheet tabs */
.sheetbar { display: flex; align-items: flex-start; height: 34px; flex: none; border-bottom: 1px solid #c6c6c6; }
.arrows { display: flex; gap: 27px; width: 115px; padding: 10px 0 0 28px; }
.stab { height: 27px; width: 92px; padding-bottom: 10px; font-size: 19px; color: #444; margin-top: 3px; border-right: 1px solid #a0a0a0; }
.stab.on { width: 94px; height: 30px; margin-top: 0; padding-bottom: 5px; background: #fff; color: #217346; font-weight: 500; border-right: 0; border-bottom: 2px solid #217346; }
.add { margin: 5px 0 0 38px; }
.sheetbar .dots { margin: 9px 18px 0 auto; }
.hscroll { display: flex; margin: 4px 29px 0 0; width: 38%; }
.htrack { flex: 1; background: #dadada; }
.hthumb { width: 94%; height: 25px; background: #fff; border: 1px solid #707070; }

/* status bar */
.status { display: flex; align-items: center; height: 33px; flex: none; background: #f3f3f3; padding: 0 21px 2px 10px; }
.acc { gap: 4px; margin-left: 29px; }
.views { display: flex; margin-left: auto; align-self: stretch; }
.views button { width: 60px; } .views .on { background: #c6c6c6; }
.zm { margin: 0 8px 0 9px; }
.zm + input { margin-right: 7px; }
.status input { appearance: none; width: 141px; height: 18px; background: linear-gradient(#262626, #262626) center / 100% 2px no-repeat; }
.status input::-webkit-slider-thumb { appearance: none; width: 8px; height: 17px; background: #666; }
.pct93 { width: 38px; margin-left: 9px; }
.mark { position: absolute; right: 14px; bottom: 6px; font-size: 19px; line-height: 26px; color: #888; opacity: .8; }
.meter { position: absolute; left: 0; top: 811px; width: 17px; height: 90px; background: #4d505e; border: 1px solid #8a8c95; border-left: 0; border-radius: 0 5px 5px 0; padding: 10px 0 0 3px; }
```
